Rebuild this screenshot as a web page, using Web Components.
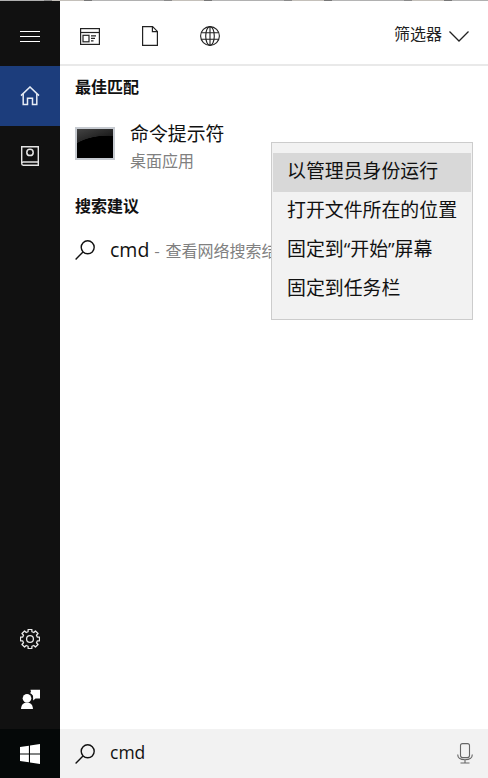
<!DOCTYPE html>
<html lang="zh-CN"><head><meta charset="utf-8"><title>Search</title>
<style>
html,body{margin:0;height:100%;background:#fff;overflow:hidden}
body{font-family:"Open Sans","Noto Sans CJK SC",sans-serif;color:#000}
</style></head><body>
<search-panel>
  <side-rail slot="rail"></side-rail>
  <filter-bar slot="top"></filter-bar>
  <section-title slot="body" first>最佳匹配</section-title>
  <app-result slot="body" name="命令提示符" kind="桌面应用"></app-result>
  <section-title slot="body">搜索建议</section-title>
  <suggest-row slot="body" query="cmd" hint="查看网络搜索结果"></suggest-row>
  <search-box slot="bottom" value="cmd"></search-box>
  <context-menu slot="overlay">
    <menu-entry active>以管理员身份运行</menu-entry>
    <menu-entry>打开文件所在的位置</menu-entry>
    <menu-entry>固定到“开始”屏幕</menu-entry>
    <menu-entry>固定到任务栏</menu-entry>
  </context-menu>
</search-panel>
<script>
const FONT='"Noto Sans CJK SC",sans-serif';
const LENS='<svg width="20" height="20" viewBox="0 0 20 20" fill="none" stroke="#111" stroke-width="1.4"><circle cx="12.700" cy="7.300" r="6.500"/><path d="M8 11.900 .6 19.400"/></svg>';
function gear(){
  const n=8,c=10,R=9.7,r=7.5;let d='';
  for(let i=0;i<n;i++){
    const a=i*2*Math.PI/n,w=.26,g=.19;
    const pts=[[r,a-w],[R,a-g],[R,a+g],[r,a+w]];
    pts.forEach((p,j)=>{d+=(i===0&&j===0?'M':'L')+(c+p[0]*Math.cos(p[1])).toFixed(2)+' '+(c+p[0]*Math.sin(p[1])).toFixed(2)+' ';});
  }
  return d+'Z';
}
class Base extends HTMLElement{
  constructor(){super();this.attachShadow({mode:'open'});}
  connectedCallback(){this.shadowRoot.innerHTML=this.render();}
}
customElements.define('search-panel',class extends Base{render(){return `<style>
:host{display:grid;grid-template-columns:60px 1fr;grid-template-rows:1fr;width:488px;height:778px;position:relative;overflow:hidden}
.main{display:flex;flex-direction:column;min-width:0}
.body{flex:1;display:flex;flex-direction:column;min-height:0;overflow:hidden}
.strip{position:absolute;left:0;right:0;top:0;height:1px;background:repeating-linear-gradient(90deg,#b0b0b0 0 44px,#8a8a8a 44px 52px,#c4c0ba 52px 84px,#777 84px 92px,#b5b5b5 92px 120px)}
</style>
<slot name="rail"></slot>
<div class="main"><slot name="top"></slot><div class="body"><slot name="body"></slot></div><slot name="bottom"></slot></div>
<slot name="overlay"></slot><div class="strip"></div>`}});
customElements.define('side-rail',class extends Base{render(){return `<style>
:host{display:flex;flex-direction:column;background:#111;color:#fff}
.b{height:60px;display:flex;align-items:center;justify-content:center;flex:none}
.menu{height:66px;padding-top:8px;box-sizing:border-box}
.home{background:#1c3d7c}
.sp{flex:1}
.win{height:49px;background:#050808;padding-top:1px;box-sizing:border-box}
svg{display:block}
</style>
<div class="b menu"><svg width="20" height="12" viewBox="0 0 20 12" stroke="#fff" fill="none"><path d="M0 .5h20M0 5.500h20M0 10.500h20"/></svg></div>
<div class="b home"><svg width="20" height="20" viewBox="0 0 20 20" fill="none" stroke="#e6ecf5" stroke-width="1.500"><path d="M1 9.600 10 1l9 8.600"/><path d="M3.200 8v10.500h4.300v-6.200h5v6.200h4.300V8"/></svg></div>
<div class="b"><svg width="20" height="20" viewBox="0 0 20 20" fill="none" stroke="#e4e4e4" stroke-width="1.400"><path d="M1.700 17V.8h16.600v18.400H3.200A1.600 1.600 0 0 1 1.700 17.600 1.600 1.600 0 0 1 3.200 16h15"/><circle cx="10" cy="6.400" r="3.200" stroke-width="1.500"/></svg></div>
<div class="sp"></div>
<div class="b"><svg width="20" height="20" viewBox="0 0 20 20" fill="none" stroke="#eaeaea" stroke-width="1.300" stroke-linejoin="round"><circle cx="10" cy="10" r="3.400"/><path d="${gear()}"/></svg></div>
<div class="b"><svg width="20" height="20" viewBox="0 0 20 20" fill="#fff"><circle cx="7" cy="9.300" r="4.300"/><path d="M1 21c0-5 2-7.600 6-7.600s6 2.600 6 7.600z"/><path d="M10.500 1H20v8.800h-4.500l-2.300 2-.2-4.800a6 6 0 0 0-3-2.800l1-1z" transform="translate(0 -.3)"/></svg></div>
<div class="b win"><svg width="20" height="20" viewBox="0 0 20 20" fill="#fff"><path d="M0 3 8.900 1.700v7.900H0zM10 1.500 20 0v9.600H10zM0 10.600h8.900v7.700L0 17zM10 10.600h10V20l-10-1.500z"/></svg></div>`}});
customElements.define('filter-bar',class extends Base{render(){return `<style>
:host{display:flex;align-items:center;height:66px;box-sizing:border-box;border-bottom:2px solid #e9e9e9;padding:4px 19px 0 20px;flex:none}
.icons{display:flex;gap:41px;align-items:center;margin-top:4px}
.sp{flex:1}
.t{font:16px/22px ${FONT};color:#222;margin-right:7px;margin-top:-3px}
svg{display:block}
.chev{margin-top:4px}
</style>
<div class="icons">
<svg width="20" height="17" viewBox="0 0 20 17" fill="none" stroke="#222" stroke-width="1.200"><rect x=".6" y=".6" width="18.800" height="15.800"/><path d="M.6 4.500h18.800"/><rect x="3" y="7.300" width="6" height="6.500"/><path d="M11 7.800h5M11 10.300h4M11 12.800h2.500" stroke-width="1.300"/></svg>
<svg width="16" height="20" viewBox="0 0 16 20" fill="none" stroke="#222" stroke-width="1.200" style="margin-left:1px"><path d="M.6.600h10l4.800 4.800v14H.600z"/><path d="M10.400.600v5h5"/></svg>
<svg width="20" height="20" viewBox="0 0 20 20" fill="none" stroke="#222" stroke-width="1.100" style="margin-left:1px"><circle cx="10" cy="10" r="9.400"/><ellipse cx="10" cy="10" rx="4.300" ry="9.400"/><path d="M10 .6v18.800M1.200 6.700h17.600M1.200 13.300h17.600"/></svg>
</div><div class="sp"></div><span class="t">筛选器</span>
<svg class="chev" width="20" height="11" viewBox="0 0 20 11" fill="none" stroke="#222" stroke-width="1.300"><path d="M.5.500 10 10 19.500.500"/></svg>`}});
customElements.define('section-title',class extends Base{render(){const f=this.hasAttribute('first');return `<style>
:host{display:block;font:700 16px/22px ${FONT};color:#111;padding:${f?'9px':'0'} 0 0 15px}
</style><slot></slot>`}});
customElements.define('app-result',class extends Base{render(){return `<style>
:host{display:flex;align-items:flex-start;height:97px;box-sizing:border-box;padding:22px 0 0 15px;flex:none}
.ic{width:40px;height:33px;box-sizing:border-box;border:2px solid #c6cad0;background:radial-gradient(ellipse 44px 26px at 85% 112%,#000 98%,transparent 100%),linear-gradient(160deg,#444 0,#1c1c1c 45%,#111 100%);margin-top:8px}
.tx{margin-left:15px}
.n{font:18.9px/28px ${FONT};color:#111}
.k{font:16px/20px ${FONT};color:#808080;margin-top:3px}
</style><div class="ic"></div><div class="tx"><div class="n">${this.getAttribute('name')}</div><div class="k">${this.getAttribute('kind')}</div></div>`}});
customElements.define('suggest-row',class extends Base{render(){return `<style>
:host{display:flex;align-items:center;height:40px;padding:14px 0 0 15px;white-space:nowrap}
svg{display:block;flex:none}
.q{font:19.5px/26px "Open Sans",${FONT};color:#111;margin-left:15px}
.h{font:16px/26px ${FONT};color:#808080;margin-left:5px;word-spacing:2px}
</style>${LENS}<span class="q">${this.getAttribute('query')}</span><span class="h">- ${this.getAttribute('hint')}</span>`}});
customElements.define('search-box',class extends Base{render(){return `<style>
:host{display:flex;align-items:center;height:49px;background:#f2f2f2;padding:0 15px;flex:none}
svg{display:block;flex:none}
.q{font:17.5px/26px "Open Sans",${FONT};color:#111;margin-left:15px;flex:1;margin-top:-4px}
</style>${LENS}<span class="q">${this.getAttribute('value')}</span>
<svg width="16" height="21" viewBox="0 0 16 21" fill="none" stroke="#666" stroke-width="1.100"><rect x="3.500" y=".6" width="9" height="14" rx="2"/><path d="M.7 11.500c0 3.500 3 5.200 7.300 5.200s7.300-1.700 7.300-5.200M8 16.700v3M3.500 20h9"/></svg>`}});
customElements.define('context-menu',class extends Base{render(){return `<style>
:host{position:absolute;left:271px;top:142px;width:202px;height:178px;box-sizing:border-box;border:1px solid #ccc;background:#f2f2f2;padding:10px 1px 0;display:flex;flex-direction:column}
</style><slot></slot>`}});
customElements.define('menu-entry',class extends Base{render(){return `<style>
:host{display:block;height:39px;box-sizing:border-box;padding-left:14px;font:18.9px/36px "Open Sans",${FONT};color:#111;white-space:nowrap}
:host([active]){background:#d8d8d8}
</style><slot></slot>`}});
</script></body></html>
